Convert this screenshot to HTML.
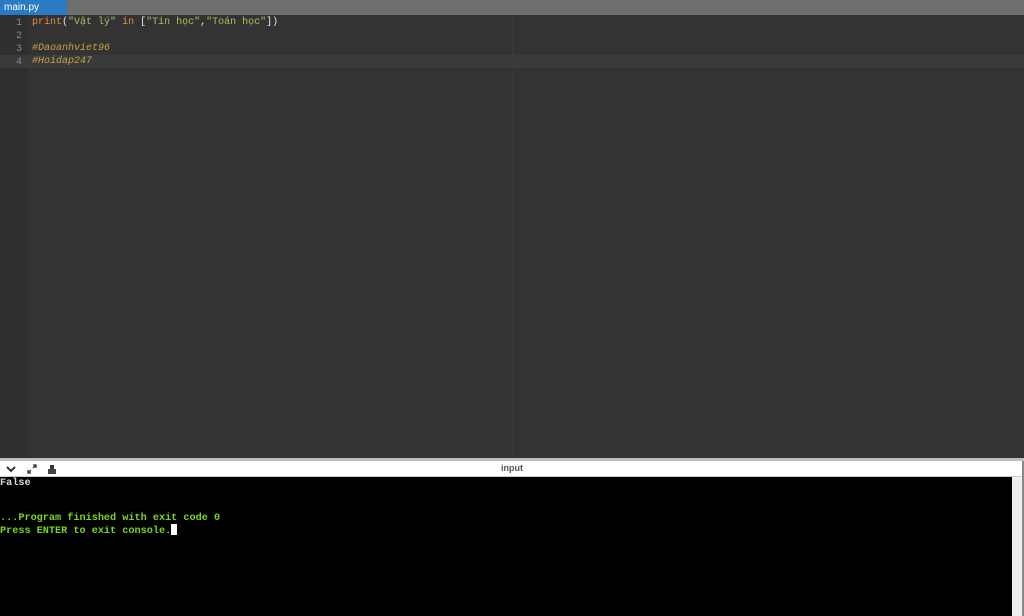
<!DOCTYPE html>
<html><head><meta charset="utf-8"><style>
*{margin:0;padding:0;box-sizing:border-box}
body{width:1024px;height:616px;overflow:hidden;background:#333;position:relative;font-family:"Liberation Sans",sans-serif}
.tabbar{position:absolute;left:0;top:0;width:1024px;height:15px;background:#6e6e6e}
.tab{position:absolute;left:0;top:0;width:67px;height:15px;background:#2b7bc4;color:#fff;font-size:10px;line-height:15px;padding-left:4px}
.editor{position:absolute;left:0;top:15px;width:1024px;height:443px;background:#333}
.gutter{position:absolute;left:0;top:0;width:28px;height:443px;background:#2f2f2f}
.margin{position:absolute;left:512px;top:0;width:1px;height:443px;background:#3a3a3a}
.active{position:absolute;left:0;top:40px;width:1024px;height:13px;background:#383a3c}
.ln{position:absolute;left:0;width:22px;text-align:right;color:#8a8a8a;font:9.7px/13px "Liberation Mono",monospace}
.code{position:absolute;left:32px;font:10px/13px "Liberation Mono",monospace;color:#e8e8e8;white-space:pre}
.kw{color:#e0913b}.st{color:#a5c25c}.cm{color:#c9a04a;font-style:italic}
.div{position:absolute;left:0;top:458px;width:1024px;height:3px;background:#bdbdbd}
.tool{position:absolute;left:0;top:461px;width:1024px;height:16px;background:#fff;border-bottom:1px solid #ccc}
.tool .t{position:absolute;left:0;width:1024px;text-align:center;top:2px;font-size:9px;color:#555;font-weight:bold}
.con{position:absolute;left:0;top:477px;width:1012px;height:139px;background:#000;font:bold 10.2px/11.5px "Liberation Mono",monospace;white-space:pre;color:#ddd;padding-top:1px}
.sb{position:absolute;left:1012px;top:477px;width:10px;height:139px;background:#f0f0f0}
.edge{position:absolute;left:1022px;top:461px;width:2px;height:155px;background:#888}
.g{color:#7ed321}
.cur{display:inline-block;width:6px;height:11px;background:#fff;vertical-align:-2px}
</style></head><body>
<div class="tabbar"><div class="tab">main.py</div></div>
<div class="editor">
<div class="gutter"></div>
<div class="active"></div>
<div class="margin"></div>
<div class="ln" style="top:1px">1</div>
<div class="ln" style="top:14px">2</div>
<div class="ln" style="top:27px">3</div>
<div class="ln" style="top:40px">4</div>
<div class="code" style="top:1px"><span class="kw">print</span>(<span class="st">"Vật lý"</span> <span class="kw">in</span> [<span class="st">"Tin học"</span>,<span class="st">"Toán học"</span>])</div>
<div class="code cm" style="top:27px">#Daoanhviet96</div>
<div class="code cm" style="top:40px">#Hoidap247</div>
</div>
<div class="div"></div>
<div class="tool">
<svg style="position:absolute;left:6px;top:4px" width="10" height="8"><path d="M1 2 L5 6 L9 2" stroke="#333" stroke-width="2" fill="none"/></svg>
<svg style="position:absolute;left:27px;top:3px" width="10" height="10"><path d="M1 9 L4 6 M6 4 L9 1 M6 1 H9 V4 M1 6 V9 H4" stroke="#333" stroke-width="1.3" fill="none"/></svg>
<svg style="position:absolute;left:47px;top:3px" width="10" height="11"><rect x="3" y="1" width="4" height="4" fill="#333"/><rect x="1" y="5" width="8" height="5" fill="#444"/></svg>
<div class="t">input</div></div>
<div class="con">False


<span class="g">...Program finished with exit code 0
Press ENTER to exit console.</span><span class="cur"></span></div>
<div class="sb"></div>
<div class="edge"></div>
</body></html>
